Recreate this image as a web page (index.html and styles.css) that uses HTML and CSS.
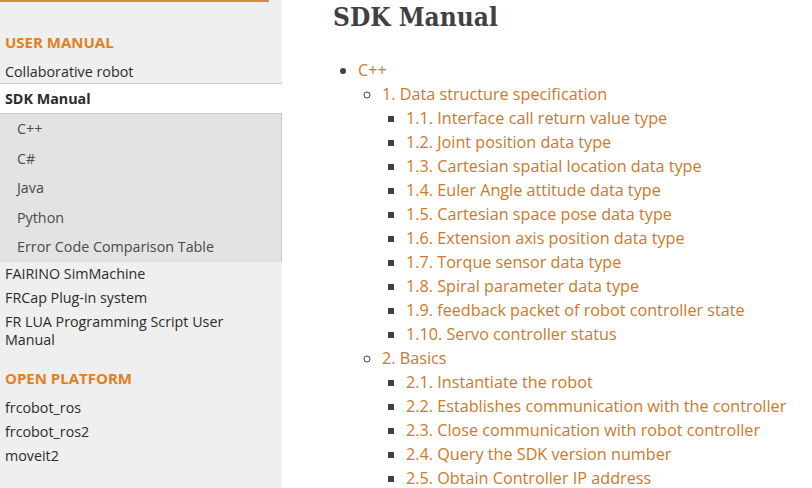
FILE: index.html
```html
<!DOCTYPE html>
<html lang="en">
<head>
    <meta charset="UTF-8">
    <meta name="viewport" content="width=device-width, initial-scale=1.0">
    <title>SDK Manual</title>
    <link rel="stylesheet" href="styles.css">
</head>
<body>
    <div class="page">
        <nav class="side">
            <div class="search-edge"></div>
            <p class="caption">USER MANUAL</p>
            <ul class="menu">
                <li><a href="#">Collaborative robot</a></li>
                <li class="current">
                    <a href="#" class="current-link">SDK Manual</a>
                    <ul class="sub">
                        <li><a href="#">C++</a></li>
                        <li><a href="#">C#</a></li>
                        <li><a href="#">Java</a></li>
                        <li><a href="#">Python</a></li>
                        <li><a href="#">Error Code Comparison Table</a></li>
                    </ul>
                </li>
                <li><a href="#">FAIRINO SimMachine</a></li>
                <li><a href="#">FRCap Plug-in system</a></li>
                <li><a href="#" class="wrap">FR LUA Programming Script User Manual</a></li>
            </ul>
            <p class="caption">OPEN PLATFORM</p>
            <ul class="menu">
                <li><a href="#">frcobot_ros</a></li>
                <li><a href="#">frcobot_ros2</a></li>
                <li><a href="#">moveit2</a></li>
            </ul>
        </nav>

        <main class="content">
            <h1>SDK Manual</h1>
            <ul class="toc">
                <li><a href="#">C++</a>
                    <ul>
                        <li><a href="#">1. Data structure specification</a>
                            <ul>
                                <li><a href="#">1.1. Interface call return value type</a></li>
                                <li><a href="#">1.2. Joint position data type</a></li>
                                <li><a href="#">1.3. Cartesian spatial location data type</a></li>
                                <li><a href="#">1.4. Euler Angle attitude data type</a></li>
                                <li><a href="#">1.5. Cartesian space pose data type</a></li>
                                <li><a href="#">1.6. Extension axis position data type</a></li>
                                <li><a href="#">1.7. Torque sensor data type</a></li>
                                <li><a href="#">1.8. Spiral parameter data type</a></li>
                                <li><a href="#">1.9. feedback packet of robot controller state</a></li>
                                <li><a href="#">1.10. Servo controller status</a></li>
                            </ul>
                        </li>
                        <li><a href="#">2. Basics</a>
                            <ul>
                                <li><a href="#">2.1. Instantiate the robot</a></li>
                                <li><a href="#">2.2. Establishes communication with the controller</a></li>
                                <li><a href="#">2.3. Close communication with robot controller</a></li>
                                <li><a href="#">2.4. Query the SDK version number</a></li>
                                <li><a href="#">2.5. Obtain Controller IP address</a></li>
                            </ul>
                        </li>
                    </ul>
                </li>
            </ul>
        </main>
    </div>
</body>
</html>
```

FILE: styles.css
```css
html, body {
    margin: 0;
    height: 100%;
    overflow: hidden;
}

body {
    font-family: "Open Sans", "Noto Sans", sans-serif;
    color: #404040;
    background: #fcfcfc;
}

a {
    text-decoration: none;
}

.page {
    display: grid;
    grid-template-columns: 282px 1fr;
    height: 100%;
}

/* sidebar */
.side {
    background: #efefef;
    font-size: 14.3px;
}

.search-edge {
    width: 269px;
    height: 2px;
    background: #e08a35;
}

.caption {
    margin: 28px 0 0;
    padding: 0 5px 6px;
    line-height: 24px;
    font-size: 15px;
    font-weight: bold;
    color: #e2801f;
}

.menu {
    list-style: none;
    margin: 0;
    padding: 0;
}

.menu a {
    display: block;
    padding: 0 5px;
    line-height: 24px;
    color: #2b2b2b;
}

.menu .wrap {
    width: 236px;
    padding: 3px 5px;
    line-height: 18px;
}

.menu .current {
    background: #fff;
    border-top: 1px solid #c9c9c9;
    margin-top: -1px;
}

.menu .current-link {
    line-height: 29px;
    font-weight: bold;
}

.sub {
    list-style: none;
    margin: 0;
    padding: 0;
    background: #e3e3e3;
    border-top: 1px solid #c9c9c9;
    border-right: 1px solid #c9c9c9;
}

.sub a {
    padding-left: 17px;
    line-height: 29.6px;
    color: #4a4a4a;
}

.menu + .caption {
    margin-top: 14px;
}

/* content */
.content {
    background: #fff;
    padding: 0 52px;
}

h1 {
    margin: 0 0 24px -1px;
    font-family: "DejaVu Serif", serif;
    font-stretch: condensed;
    font-size: 26px;
    line-height: 34px;
    font-weight: bold;
    color: #404040;
}

.toc,
.toc ul {
    margin: 0;
    padding-left: 24px;
    font-size: 16.2px;
    line-height: 24px;
}

.toc {
    list-style: disc;
}

.toc ul {
    list-style: circle;
}

.toc ul ul {
    list-style: square;
}

.toc li {
    color: #404040;
    white-space: nowrap;
}

.toc a {
    color: #cb7a2a;
}
```
